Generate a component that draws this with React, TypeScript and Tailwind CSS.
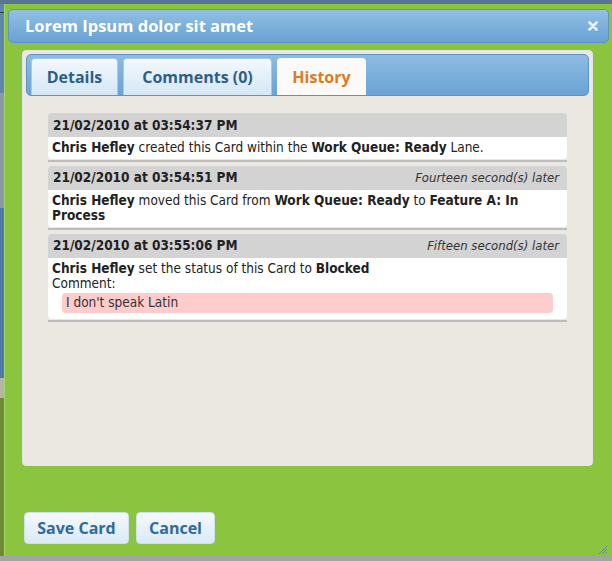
import React from 'react';

type Entry = {
    date: string;
    ago?: string;
    body: React.ReactNode;
    comment?: string;
};

const entries: Entry[] = [
    {
        date: '21/02/2010 at 03:54:37 PM',
        body: (
            <>
                <b>Chris Hefley</b> created this Card within the <b>Work Queue: Ready</b> Lane.
            </>
        ),
    },
    {
        date: '21/02/2010 at 03:54:51 PM',
        ago: 'Fourteen second(s) later',
        body: (
            <>
                <b>Chris Hefley</b> moved this Card from <b>Work Queue: Ready</b> to <b>Feature A: In</b>
                <br />
                <b>Process</b>
            </>
        ),
    },
    {
        date: '21/02/2010 at 03:55:06 PM',
        ago: 'Fifteen second(s) later',
        body: (
            <>
                <b>Chris Hefley</b> set the status of this Card to <b>Blocked</b>
                <br />
                Comment:
            </>
        ),
        comment: "I don't speak Latin",
    },
];

const HistoryItem: React.FC<{ entry: Entry }> = ({ entry }) => (
    <div className="border-b-2 border-[#bcbcbc] mb-[4px] pb-[1px]">
        <div className="h-[24px] bg-[#d3d3d3] rounded-t-[4px] flex items-center justify-between pl-[5px] pr-[8px]">
            <span className="text-[13.5px] font-bold text-[#222]">{entry.date}</span>
            {entry.ago && <span className="text-[13px] italic text-[#333]">{entry.ago}</span>}
        </div>
        <div className="bg-white rounded-b-[4px] px-[4px] pt-[3px] pb-[3px] text-[13.5px] leading-[15.5px] text-[#222]">
            <div>{entry.body}</div>
            {entry.comment && (
                <div className="mx-[10px] mt-[1px] mb-[3px] h-[20px] bg-[#ffcccc] rounded-[4px] px-[4px] flex items-center text-[#333]">
                    {entry.comment}
                </div>
            )}
        </div>
    </div>
);

const Tab: React.FC<{ label: string; active?: boolean; width: string }> = ({ label, active, width }) => (
    <div
        className={
            active
                ? `${width} h-[37px] bg-[#fbfaf8] rounded-t-[4px] flex items-center justify-center text-[16px] font-bold text-[#e07a1e]`
                : `${width} h-[37px] bg-gradient-to-b from-[#f2f8fd] to-[#d5e7f5] border border-[#a9c9e3] border-b-0 rounded-t-[4px] flex items-center justify-center text-[16px] font-bold text-[#2e5e88]`
        }
    >
        {label}
    </div>
);

export default function App() {
    return (
        <div className="w-[612px] h-[561px] overflow-hidden flex flex-col bg-[#a4a4a4] font-['Open_Sans',sans-serif]">
            <div className="h-[4px] bg-[#587592] shrink-0"></div>
            <div className="flex h-[552px] shrink-0">
                <div className="w-[4px] flex flex-col">
                    <div className="h-[8px] bg-[#5f86ab]"></div>
                    <div className="h-[1px] bg-[#2c3e52]"></div>
                    <div className="h-[80px] bg-[#5f86ab]"></div>
                    <div className="h-[115px] bg-[#8e9aa3]"></div>
                    <div className="h-[170px] bg-[#4d7aab]"></div>
                    <div className="h-[20px] bg-[#b7b3a6]"></div>
                    <div className="flex-1 bg-[#6f8b32]"></div>
                </div>
                <div className="relative w-[608px] bg-[#8bc43f] border-l border-[#a6d46d] flex flex-col px-[3px] pt-[5px]">
                    <div className="h-[34px] rounded-[5px] bg-gradient-to-b from-[#92c0e4] to-[#68a1d3] border border-[#5c94c6] flex items-center justify-between pl-[16px] pr-[10px]">
                        <span className="text-[16.5px] font-bold text-white">Lorem Ipsum dolor sit amet</span>
                        <svg width="10" height="10" viewBox="0 0 10 10">
                            <path d="M1.5 1.5 L8.5 8.5 M8.5 1.5 L1.5 8.5" stroke="#eaf2fa" strokeWidth="2.6" strokeLinecap="round" />
                        </svg>
                    </div>
                    <div className="ml-[14px] mt-[7px] w-[571px] h-[416px] bg-[#ebe7e1] rounded-[4px] border border-[#dfe6ea] p-[3px]">
                        <div className="h-[42px] rounded-[5px] bg-gradient-to-b from-[#8dbce2] to-[#6aa3d4] border border-[#5c94c6] flex items-end gap-[5px] pl-[4px]">
                            <Tab label="Details" width="w-[87px]" />
                            <Tab label="Comments (0)" width="w-[149px]" />
                            <Tab label="History" active width="w-[89px]" />
                        </div>
                        <div className="mt-[17px] mx-[22px] font-['DejaVu_Sans_Condensed','DejaVu_Sans',sans-serif] font-stretch-condensed">
                            {entries.map((e, i) => (
                                <HistoryItem key={i} entry={e} />
                            ))}
                        </div>
                    </div>
                    <div className="ml-[16px] mt-[46px] flex gap-[7px]">
                        <button className="w-[105px] h-[32px] rounded-[4px] bg-gradient-to-b from-[#f5f9fd] to-[#dae9f5] border border-[#cde0ef] text-[16px] font-bold text-[#2f6a9c]">
                            Save Card
                        </button>
                        <button className="w-[79px] h-[32px] rounded-[4px] bg-gradient-to-b from-[#f5f9fd] to-[#dae9f5] border border-[#cde0ef] text-[16px] font-bold text-[#2f6a9c]">
                            Cancel
                        </button>
                    </div>
                    <svg className="absolute right-[4px] bottom-[1px]" width="12" height="12" viewBox="0 0 12 12">
                        <path d="M11 3 L3 11 M11 6 L6 11 M11 9 L9 11" stroke="#5f86a8" strokeWidth="1" />
                    </svg>
                </div>
            </div>
        </div>
    );
}
